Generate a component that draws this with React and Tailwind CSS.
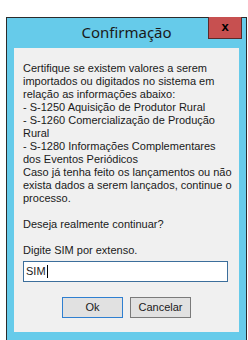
import React from 'react';

const lines = [
  'Certifique se existem valores a serem',
  'importados ou digitados no sistema em',
  'relação as informações abaixo:',
  '- S-1250 Aquisição de Produtor Rural',
  '- S-1260 Comercialização de Produção',
  'Rural',
  '- S-1280 Informações Complementares',
  'dos Eventos Periódicos',
  'Caso já tenha feito os lançamentos ou não',
  'exista dados a serem lançados, continue o',
  'processo.',
];

export default function App() {
  return (
    <div className="w-[248px] h-[340px] overflow-hidden bg-white pt-[17px] pl-[6px]">
      <div className="relative w-[241px] h-[340px] border border-b-0 border-[#2b2b2b] bg-[#66cbea]">
        {/* Title bar */}
        <div className="h-[30px] flex items-center justify-center pb-[2px] text-[15px] text-[#1a1a1a] font-['Noto_Sans',sans-serif]">
          Confirmação
        </div>
        <div className="absolute top-[-1px] right-[4px] w-[34px] h-[22px] bg-[#c75050] border border-[#5a2a2a] border-t-0 flex items-center justify-center">
          <span className="text-[13px] font-bold leading-none text-black font-['Liberation_Sans',sans-serif] -mt-[2px]">x</span>
        </div>

        {/* Content */}
        <div className="mx-[7px] h-[284px] bg-[#f0f0f0] pl-[9px] pt-[14px] text-[11px] leading-[13px] text-[#1a1a1a] font-['Liberation_Sans',sans-serif]">
          {lines.map((l) => (
            <div key={l} className="whitespace-nowrap">{l}</div>
          ))}
          <div className="mt-[13px]">Deseja realmente continuar?</div>
          <div className="mt-[13px]">Digite SIM por extenso.</div>
          <div className="mt-[4px] w-[205px] h-[21px] bg-white border border-[#3c6e9b] flex items-center pl-[2px]">
            <span>SIM</span>
            <span className="w-px h-[13px] bg-black ml-[1px]" />
          </div>
          <div className="flex justify-center gap-[7px] mt-[15px] pr-[9px]">
            <button className="w-[61px] h-[21px] bg-[#e1e1e1] border border-[#2f7fd0] text-[11px]">Ok</button>
            <button className="w-[61px] h-[21px] bg-[#e1e1e1] border border-[#7a7a7a] text-[11px]">Cancelar</button>
          </div>
        </div>
      </div>
    </div>
  );
}
